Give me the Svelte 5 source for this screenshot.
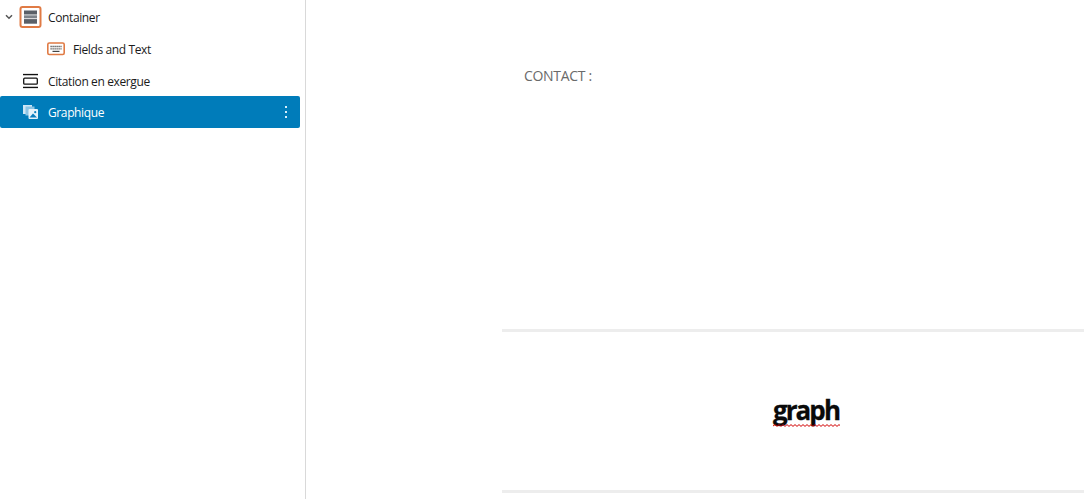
<script lang="ts">
	let rows = [
		{ label: 'Container', icon: 'container', indent: 48 },
		{ label: 'Fields and Text', icon: 'fields', indent: 73 },
		{ label: 'Citation en exergue', icon: 'citation', indent: 48 },
		{ label: 'Graphique', icon: 'graph', indent: 48, selected: true }
	];

	// spell-check squiggle under the word
	let squiggle = 'M0 2' + Array.from({ length: 17 }, (_, i) => ` L${i * 4 + 2} 0.6 L${i * 4 + 4} 2.4`).join('');
</script>

<div class="page">
	<aside class="tree">
		{#each rows as row}
			<div class="row" class:selected={row.selected} style="padding-left: {row.indent}px">
				{#if row.icon === 'container'}
					<svg class="chevron" width="8" height="6" viewBox="0 0 8 6" fill="none">
						<path d="M1 1.2 4 4.2 7 1.2" stroke="#555" stroke-width="1.5" />
					</svg>
					<svg class="icon" style="left: 19px" width="23" height="23" viewBox="0 0 23 23" fill="none">
						<rect x="1.5" y="1.5" width="20" height="20" rx="2" fill="#fff" stroke="#e07b45" stroke-width="2" />
						<rect x="5" y="5" width="13" height="4" fill="#5a6068" />
						<rect x="5" y="9.8" width="13" height="3" fill="#7d838a" />
						<rect x="5" y="13.6" width="13" height="4.6" fill="#5a6068" />
					</svg>
				{:else if row.icon === 'fields'}
					<svg class="icon" style="left: 47px" width="18" height="14" viewBox="0 0 18 14" fill="none">
						<rect x="0.8" y="1" width="16.4" height="11.5" rx="1.5" fill="#fff" stroke="#e07b45" stroke-width="1.6" />
						<path d="M3.5 4.5h11M3.5 6.8h11" stroke="#444" stroke-width="1.3" stroke-dasharray="1.2 .8" />
						<path d="M5.5 9.4h7" stroke="#444" stroke-width="1.2" />
					</svg>
				{:else if row.icon === 'citation'}
					<svg class="icon" style="left: 22px" width="17" height="15" viewBox="0 0 17 15" fill="none">
						<path d="M1 1h15M1 14h15" stroke="#111" stroke-width="1.6" />
						<rect x="1.7" y="4.7" width="13.6" height="6" rx="1" stroke="#111" stroke-width="1.3" />
					</svg>
				{:else}
					<svg class="icon" style="left: 22px" width="17" height="16" viewBox="0 0 17 16" fill="none">
						<rect x="1" y="1" width="9" height="9" fill="#cfe6f5" />
						<rect x="3.5" y="2.5" width="9" height="9" fill="#8cc4e4" />
						<rect x="6.5" y="5" width="9.5" height="10" rx="1" fill="#e6f3fb" />
						<path d="M7.5 13.5 11 9.5l4 4z" fill="#0a7dbe" />
						<circle cx="13.2" cy="8.2" r="1.1" fill="#0a7dbe" />
					</svg>
				{/if}
				<span>{row.label}</span>
				{#if row.selected}
					<div class="dots"><i></i><i></i><i></i></div>
				{/if}
			</div>
		{/each}
	</aside>

	<main class="content">
		<section class="contact">
			<p>CONTACT :</p>
		</section>
		<section class="graph">
			<strong>
				graph
				<svg class="squiggle" width="67" height="4" viewBox="0 0 67 4" fill="none">
					<path d={squiggle} stroke="#d00000" stroke-width="1" />
				</svg>
			</strong>
		</section>
	</main>
</div>

<style>
	:global(body) {
		margin: 0;
		background: #fff;
		overflow: hidden;
	}

	.page {
		display: flex;
		width: 1084px;
		height: 499px;
		overflow: hidden;
	}

	.tree {
		box-sizing: border-box;
		width: 306px;
		height: 499px;
		padding-top: 1px;
		border-right: 1px solid #d9d9d9;
		font-family: 'Open Sans', sans-serif;
		font-size: 12px;
		letter-spacing: -0.38px;
		color: #1b1b1b;
		flex-shrink: 0;
	}

	.row {
		position: relative;
		box-sizing: border-box;
		display: flex;
		align-items: center;
		height: 32px;
		width: 300px;
	}

	.row:nth-child(3) {
		height: 31px;
	}

	.row:nth-child(3) span {
		padding-top: 2px;
	}

	.row.selected {
		background: #007cba;
		color: #fff;
		border-radius: 2px;
	}

	.chevron {
		position: absolute;
		left: 5px;
		top: 13px;
	}

	.icon {
		position: absolute;
		top: 50%;
		transform: translateY(-50%);
	}

	.dots {
		position: absolute;
		right: 13px;
		top: 10px;
		display: flex;
		flex-direction: column;
		gap: 3px;
	}

	.dots i {
		display: block;
		width: 2px;
		height: 2px;
		background: #d5eefb;
	}

	.content {
		margin-left: 196px;
		flex: 1;
		font-family: 'Open Sans', sans-serif;
	}

	.contact {
		box-sizing: border-box;
		height: 329px;
		padding: 66px 0 0 22px;
		color: #6a6a6a;
		font-size: 14px;
		line-height: 19px;
	}

	.contact p {
		margin: 0;
		letter-spacing: -0.3px;
	}

	.graph {
		box-sizing: border-box;
		height: 164px;
		display: flex;
		justify-content: center;
		padding: 59px 0 0 26px;
		border-top: 3px solid #ededed;
		border-bottom: 3px solid #ededed;
	}

	.graph strong {
		position: relative;
		height: 38px;
		font-size: 26px;
		line-height: 38px;
		font-weight: 700;
		color: #0a0a0a;
		letter-spacing: -1.9px;
		-webkit-text-stroke: 0.3px #0a0a0a;
	}

	.squiggle {
		position: absolute;
		left: 0;
		top: 33px;
	}
</style>
